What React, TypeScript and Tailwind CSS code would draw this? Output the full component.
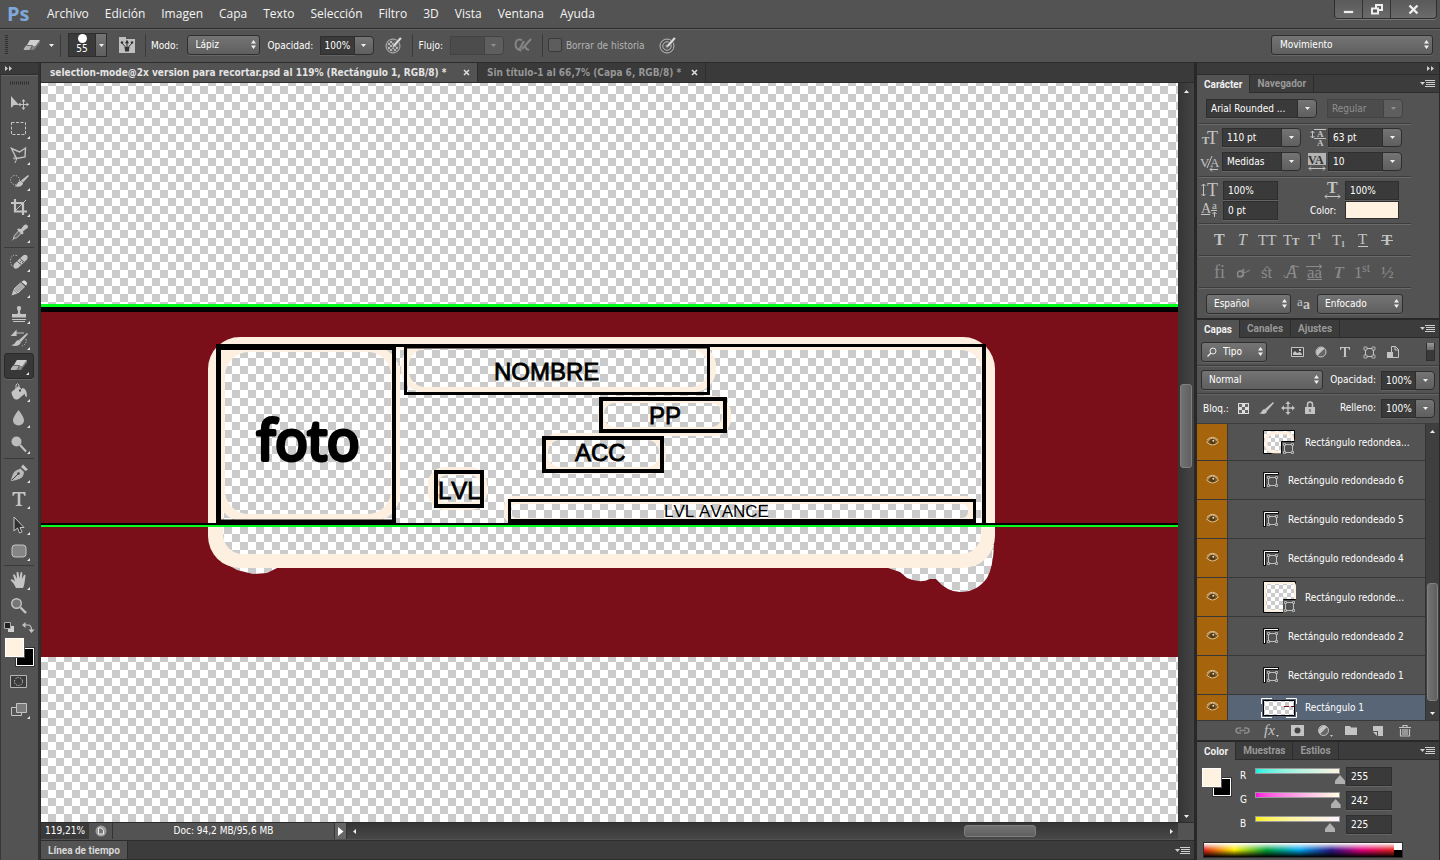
import React, { useState } from "react";

type Kids = { children?: React.ReactNode };

const FIELD =
  "min-w-0 bg-[#3a3a3a] text-[10px] leading-3 text-white outline-none border border-[#2e2e2e] shadow-[0_1px_0_#646464]";
const RAISED = "bg-linear-to-b from-[#747474] to-[#5f5f5f] border border-[#2e2e2e]";

function Svg({ w = 20, h = 20, children, className = "" }: Kids & { w?: number; h?: number; className?: string }) {
  return (
    <svg width={w} height={h} viewBox={`0 0 ${w} ${h}`} className={`shrink-0 overflow-visible ${className}`} fill="none" aria-hidden="true">
      {children}
    </svg>
  );
}

function Down({ dim = false }: { dim?: boolean }) {
  return (
    <Svg w={5} h={3}>
      <path d="M0 0h5L2.500 3z" fill={dim ? "#8f8f8f" : "#f0f0f0"} />
    </Svg>
  );
}

function Choice({ label, options, className = "", pad = "pl-2" }: { label: string; options: string[]; className?: string; pad?: string }) {
  return (
    <div className={`relative h-5 ${className}`}>
      <select
        aria-label={label}
        className={`h-full w-full appearance-none rounded-[3px] pr-4 text-[10px] leading-3 text-white outline-none shadow-[0_1px_0_#666] ${pad} ${RAISED}`}
      >
        {options.map((o) => (
          <option key={o}>{o}</option>
        ))}
      </select>
      <Svg w={5} h={9} className="pointer-events-none absolute top-[5px] right-1">
        <path d="M0 3.500h5L2.500 0zM0 5.500h5L2.500 9z" fill="#f0f0f0" />
      </Svg>
    </div>
  );
}

function Combo({ label, value, className = "", dim = false }: { label: string; value: string; className?: string; dim?: boolean }) {
  return (
    <div className={`flex h-[19px] ${className}`}>
      <input
        aria-label={label}
        defaultValue={value}
        disabled={dim}
        className={
          dim
            ? "h-full w-0 min-w-0 flex-1 border border-[#434343] bg-[#4c4c4c] pl-1 text-[10px] leading-3 text-[#8f8f8f] outline-none"
            : `h-full w-0 flex-1 pl-1 ${FIELD}`
        }
      />
      <button
        type="button"
        aria-label={`${label}: opciones`}
        disabled={dim}
        className={
          dim
            ? "-ml-px flex w-5 items-center justify-center rounded-r-sm border border-[#434343] bg-[#5e5e5e]"
            : `-ml-px flex w-5 items-center justify-center rounded-r-sm ${RAISED}`
        }
      >
        <Down dim={dim} />
      </button>
    </div>
  );
}

function TabBar({ tabs }: { tabs: string[] }) {
  return (
    <div className="flex h-[18px] shrink-0 border-b border-[#2c2c2c] bg-[#3c3c3c] font-['Roboto','Noto_Sans',sans-serif]">
      {tabs.map((t, i) => (
        <button
          type="button"
          key={t}
          className={
            i === 0
              ? "-mb-px border-r border-[#2c2c2c] bg-[#535353] px-[7px] text-[10px] font-bold text-[#f0f0f0]"
              : "border-r border-[#2c2c2c] px-[7px] text-[10px] font-bold text-[#989898]"
          }
        >
          {t}
        </button>
      ))}
      <MenuGlyph />
    </div>
  );
}

function MenuGlyph() {
  return (
    <button type="button" aria-label="Menú del panel" className="ml-auto flex items-center pr-1">
      <Svg w={15} h={9}>
        <path d="M0 3h5L2.500 6z" fill="#cfcfcf" />
        <path d="M5 1.500h10M6 3.500h9M6 5.500h9M5 7.500h10" stroke="#cfcfcf" />
      </Svg>
    </button>
  );
}

/* ---------- Tool icons ---------- */

const G = "#c4c4c4";

const eraser = (
  <>
    <path d="M2 14 8 4h10l-6 10z" fill="#8b8b8b" />
    <path d="M8 4h10l-4 6H4.500z" fill="#d0d0d0" />
    <path d="M7 14H2.500Q1 14 2 12.500L4 9.500h6z" fill="#b5b5b5" />
    <path d="m10.500 14 7.500-10v2.500L12 14z" fill="#777" />
    <path d="m4.500 9.500h6L8.500 14" stroke="#555" strokeWidth=".8" />
  </>
);

const toolGroups: { name: string; icon: React.ReactNode; corner?: boolean }[][] = [
  [
    {
      name: "Mover",
      corner: false,
      icon: (
        <>
          <path d="M2 3v12l3-3h5z" fill={G} />
          <path d="M14.500 7v9M10 11.500h9" stroke={G} />
          <path d="m14.500 6 2 2.500h-4zM14.500 17l2-2.500h-4zM9 11.500 11.500 9.500v4zM20 11.500l-2.500-2v4z" fill={G} />
        </>
      ),
    },
    { name: "Marco", icon: <path d="M2.500 3.500h14v12h-14z" stroke={G} strokeDasharray="3 1.500" /> },
    {
      name: "Lazo",
      icon: (
        <>
          <path d="m2.500 3.500 8 3.500 6-4-.5 9-8.500 1.500z" stroke={G} strokeWidth="1.400" />
          <path d="M8 13q-2-3-3.500 0 0 2 3.500.5-1 2-2 4.500" stroke={G} />
        </>
      ),
    },
    {
      name: "Selección rápida",
      icon: (
        <>
          <circle cx="6" cy="9" r="4.500" stroke={G} strokeDasharray="1.200 1.500" />
          <path d="M19 4 12 9.500l2 2L20 5z" fill={G} />
          <path d="M12 10c-4 0-3 5-7 5 4 2 9 0 9-3z" fill={G} />
        </>
      ),
    },
    {
      name: "Recortar",
      icon: (
        <>
          <path d="M6 2v12.500h12M2 6h12v12" stroke={G} strokeWidth="2.200" />
          <path d="m7 13 10-10" stroke={G} />
        </>
      ),
    },
    {
      name: "Cuentagotas",
      icon: (
        <>
          <path d="m4.500 15.500.8-3L10.500 7l2.500 2.500-5.300 5.300z" stroke={G} fill="#6b6b6b" />
          <path d="m2.500 18 2-3 1 .8z" fill={G} />
          <path d="M9.500 5.500 12 6l2.500-3.200Q17 .5 18.500 2.500T17 6l-3 2.500.5 2-1.500 1-5-5z" fill={G} />
        </>
      ),
    },
  ],
  [
    {
      name: "Pincel corrector",
      icon: (
        <>
          <path d="M8 3.500Q2 2 1.500 8.500 1.500 13 4 15" stroke={G} strokeDasharray="1.200 1.500" />
          <path d="M5 12 14 3.500q2.500-1.500 4 0t0 4L9 16q-2.500 1.500-4 0t0-4z" fill={G} />
          <path d="m8 9 4.500 4M11 6.500l4.500 4" stroke="#666" />
          <path d="M11 9h1v1h-1zM13 10h1v1h-1zM10.500 11h1v1h-1zM12.500 8h1v1h-1z" fill="#555" />
        </>
      ),
    },
    {
      name: "Lápiz",
      icon: (
        <>
          <path d="m2.500 17.500 2-6 4 4z" fill={G} />
          <path d="m5 11 6.500-6 4 3.800L9 15z" fill="#a9a9a9" stroke={G} />
          <path d="M12.500 4Q15 1.500 17 3.500t0 4z" fill="#dcdcdc" />
        </>
      ),
    },
    {
      name: "Tampón",
      icon: (
        <>
          <path d="M9 9q.5-2-1-4-.5-3 2-3t2 3q-1.500 2-1 4l1 1h5v3.500H3V10h5z" fill={G} />
          <path d="M3 15.500h14M4 17.500h12" stroke={G} />
        </>
      ),
    },
    {
      name: "Pincel de historia",
      icon: (
        <>
          <path d="M7 3h8M7 1v4.500L3 5.500 7 1z" stroke={G} strokeWidth="1.200" fill={G} />
          <path d="m18 3-8 7 2 2 7-8z" fill={G} />
          <path d="M10 10c-4 0-3 5-8 5 4 2 9 1 10-3z" fill={G} />
          <path d="M17 9q1 5-4 7" stroke={G} strokeDasharray="1.300 1.300" />
        </>
      ),
    },
    { name: "Borrador", icon: eraser },
    {
      name: "Bote de pintura",
      icon: (
        <>
          <path d="m2.500 10 7-6 7 7-7 6q-3 1.500-5-1T2.500 10z" fill={G} />
          <path d="M7 8V3q1.500-3 3 0v6" stroke={G} />
          <path d="M10 8.500h2" stroke="#444" strokeWidth="2" />
          <path d="M13 6q5 0 5 9l-2-1q0-4-3-5z" fill={G} />
        </>
      ),
    },
    { name: "Desenfocar", icon: <path d="M9.500 2q-5.500 7-5.500 10.500a5.500 5 0 0 0 11 0Q15 9 9.500 2z" fill="#bcbcbc" /> },
    {
      name: "Sobreexponer",
      icon: (
        <>
          <circle cx="7.500" cy="7.500" r="5" fill="#bcbcbc" />
          <path d="m11 11 6 6.500" stroke={G} strokeWidth="2" />
        </>
      ),
    },
  ],
  [
    {
      name: "Pluma",
      icon: (
        <>
          <path d="M2 18q1-8 5-10.500l4.500-2L15 9q-.5 5-3 6-3 2-10 3z" fill="#b8b8b8" />
          <path d="m3 17 6-6" stroke="#444" />
          <circle cx="9.500" cy="10.500" r="1.300" fill="#444" />
          <path d="m12 4 2-2.500 5 5L16.500 8z" fill={G} />
        </>
      ),
    },
    { name: "Texto", icon: <path d="M3.500 3h13v4h-1q-.5-2.500-2-2.500h-2.200V15q0 1.200 2 1.200V17H6.700v-.8q2 0 2-1.200V4.500H6.500Q5 4.500 4.500 7h-1z" fill={G} /> },
    { name: "Selección de trazado", icon: <path d="M5 2v14l3.500-3 2 5 2.500-1-2-4.500H15z" fill="#303030" stroke={G} /> },
    { name: "Rectángulo redondeado", icon: <rect x="3" y="4" width="14" height="12" rx="3" fill="#858585" stroke={G} /> },
  ],
  [
    {
      name: "Mano",
      icon: (
        <path
          d="M7 18Q5.500 14 1.500 10q1.500-2 4.500 1.500L4 5q1-1.500 2 0l2 4L7.500 2.500q1-1.500 2 0l1 6L11.500 2.500q1.200-1 1.800.5L13 9l2-4q1.300-.7 1.500.7L15.500 13Q15 16 14 18z"
          fill={G}
        />
      ),
    },
    {
      name: "Zoom",
      corner: false,
      icon: (
        <>
          <circle cx="7.500" cy="7.500" r="4.800" fill="#777" stroke={G} strokeWidth="1.400" />
          <path d="m11.500 11.500 5.500 5.500" stroke={G} strokeWidth="2.400" />
        </>
      ),
    },
  ],
];

function Corner() {
  return (
    <Svg w={3} h={3} className="absolute right-1 bottom-[3px]">
      <path d="M3 0v3H0z" fill="#e6e6e6" />
    </Svg>
  );
}

function Chevrons() {
  return (
    <Svg w={8} h={5}>
      <path d="m0 0 3 2.500L0 5zM4 0l3 2.500L4 5z" fill="#d0d0d0" />
    </Svg>
  );
}

function Toolbar() {
  const [active, setActive] = useState("Borrador");
  return (
    <aside className="flex w-10 shrink-0 flex-col border-r-2 border-l border-r-[#323232] border-l-[#383838]">
      <div className="flex h-3 shrink-0 items-center border-b border-[#2c2c2c] bg-[#3a3a3a] pl-1">
        <Chevrons />
      </div>
      <div className="flex h-[15px] shrink-0 items-center justify-center border-t border-[#646464]">
        <Svg w={20} h={4}>
          <path d="M0 2h20" stroke="#2f2f2f" strokeWidth="3" strokeDasharray="1 1" />
        </Svg>
      </div>
      <div className="flex flex-col items-center pr-px">
        {toolGroups.map((group, gi) => (
          <div key={gi} className="flex flex-col">
            {gi > 0 && <hr className="my-px h-px border-0 bg-[#3a3a3a]" />}
            {group.map((t) => (
              <button
                type="button"
                key={t.name}
                aria-label={t.name}
                onClick={() => setActive(t.name)}
                className={
                  t.name === active
                    ? "relative flex h-[26px] w-[30px] items-center justify-center rounded-[3px] border border-[#2a2a2a] bg-[#383838] shadow-[0_1px_0_#666]"
                    : "relative flex h-[26px] w-[30px] items-center justify-center"
                }
              >
                <Svg>{t.icon}</Svg>
                {t.corner !== false && <Corner />}
              </button>
            ))}
          </div>
        ))}
        <div className="flex h-4 w-[30px] items-center justify-between">
          <Svg w={10} h={10}>
            <path d="M4 4h6v6H4z" fill="#d0d0d0" />
            <path d="M.5.5h6v6h-6z" fill="#222" stroke="#aaa" />
          </Svg>
          <Svg w={12} h={11}>
            <path d="M3 3h3q3.500 0 3.500 5" stroke={G} strokeWidth="1.200" />
            <path d="M3.500 0v6L0 3zM6.500 7.500h6l-3 3.500z" fill={G} />
          </Svg>
        </div>
        <Swatches size="tools" />
        <button type="button" aria-label="Máscara rápida" className="flex h-8 w-[30px] items-center justify-center">
          <Svg w={18} h={14}>
            <path d="M.5.5h16v12H.5z" fill="#3c3c3c" stroke="#b5b5b5" />
            <circle cx="8.500" cy="6.500" r="4" stroke="#ddd" strokeDasharray="1.200 1.300" />
          </Svg>
        </button>
        <button type="button" aria-label="Modo de pantalla" className="relative flex h-6 w-[30px] items-center justify-center">
          <Svg w={18} h={16}>
            <path d="M1.500 5.500h10v8h-10z" fill="#555" stroke={G} />
            <path d="M6.500 1.500h10v9h-10z" fill="#7b7b7b" stroke={G} />
          </Svg>
          <Corner />
        </button>
      </div>
    </aside>
  );
}

function Swatches({ size }: { size: "tools" | "panel" }) {
  return (
    <div className={size === "tools" ? "relative mt-[3px] h-7 w-[29px]" : "relative h-7 w-[29px]"}>
      <button type="button" aria-label="Color de fondo" className="absolute right-0 bottom-0 size-[18px] border border-white bg-black outline-1 outline-[#333]" />
      <button type="button" aria-label="Color frontal" className="absolute top-0 left-0 size-[19px] border border-white bg-[#fff2e1] outline-1 outline-[#555]" />
    </div>
  );
}

/* ---------- Document canvas ---------- */

const CREAM = "#fef0e1";

function Ring({ x, y, w, h, r, ix, iy, iw, ih, ir }: Record<"x" | "y" | "w" | "h" | "r" | "ix" | "iy" | "iw" | "ih" | "ir", number>) {
  return (
    <>
      <rect x={x} y={y} width={w} height={h} rx={r} fill={CREAM} />
      <rect x={ix} y={iy} width={iw} height={ih} rx={ir} fill="url(#checker)" />
    </>
  );
}

function Canvas() {
  return (
    <svg className="block h-full w-full" aria-label="Documento">
      <g transform="translate(-41 -83)">
        <defs>
          <pattern id="checker" width="16" height="16" patternUnits="userSpaceOnUse" y="6">
            <path d="M0 0h16v16H0z" fill="#fff" />
            <path d="M8 0h8v8H8zM0 8h8v8H0z" fill="#cbcbcb" />
          </pattern>
        </defs>
        <rect x="41" y="83" width="100%" height="100%" fill="url(#checker)" />
        <rect x="41" y="312" width="100%" height="345" fill="#7a0f1a" />
        <path d="M213 545 223 562 237 570 253 574 267 573 277 568V545zM888 568 900 572 907 578Q920 584 930 579H936Q947 592 960 592 977 592 987 578 993 568 994 545L960 540z" fill="url(#checker)" />
        <Ring x={208} y={337} w={787} h={231} r={32} ix={223} iy={350} iw={758} ih={204} ir={20} />
        <Ring x={217} y={346} w={183} h={176} r={28} ix={225} iy={352} iw={166} ih={162} ir={24} />
        <path d="M221 346h60l-60 60z" fill={CREAM} />
        <rect x="225" y="352" width="166" height="162" rx="24" fill="url(#checker)" />
        <Ring x={401} y={344} w={315} h={48} r={22} ix={409} iy={349} iw={298} ih={38} ir={16} />
        <Ring x={598} y={396} w={133} h={40} r={17} ix={604} iy={403} iw={118} ih={24} ir={11} />
        <Ring x={542} y={433} w={124} h={41} r={17} ix={548} iy={440} iw={111} ih={27} ir={12} />
        <Ring x={428} y={467} w={59} h={43} r={17} ix={437} iy={475} iw={43} ih={27} ir={10} />
        <Ring x={504} y={496} w={472} h={28} r={10} ix={511} iy={504} iw={457} ih={14} ir={6} />
        <g fill="none" stroke="#000" strokeWidth="4">
          <path d="M216 345.500h768.500" strokeWidth="3" />
          <path d="M984 344v180" />
          <path d="M218.500 344v179" strokeWidth="5" />
          <path d="M216 347h180" strokeWidth="6" />
          <path d="M394 344v179M216 521.500h180" />
          <path d="M404 347h306" strokeWidth="3" />
          <rect x="405.500" y="346.500" width="303" height="47" strokeWidth="3" />
          <rect x="601" y="399" width="124" height="32" />
          <rect x="544" y="438" width="118" height="33" />
          <rect x="436" y="472" width="46" height="34" strokeWidth="4" />
          <path d="M509.500 523v-22.500h465V523" strokeWidth="3" />
          <path d="M508 521h468" />
        </g>
        <g fontFamily="'Liberation Sans', Arial, sans-serif" fontSize="24" stroke="#000" strokeWidth=".8" className="[font-kerning:none]">
          <text x="257" y="460" fontSize="54" fontFamily="'Open Sans', 'Noto Sans', sans-serif" strokeWidth="4" strokeLinejoin="round">foto</text>
          <text x="494" y="380">NOMBRE</text>
          <text x="649" y="424">PP</text>
          <text x="575" y="461">ACC</text>
          <text x="438" y="499">LVL</text>
          <text x="664" y="517" fontSize="17" strokeWidth="0">LVL AVANCE</text>
        </g>
        <rect x="41" y="304" width="100%" height="3" fill="#00ff1e" />
        <rect x="41" y="307" width="100%" height="5" />
        <rect x="41" y="523" width="100%" height="2" />
        <rect x="41" y="525" width="100%" height="2" fill="#00ff1e" />
      </g>
    </svg>
  );
}

function Document() {
  return (
    <main className="flex min-w-0 flex-1 flex-col">
      <div className="flex h-5 shrink-0 border-b border-[#2c2c2c] bg-[#3a3a3a] text-[10px] font-bold">
        <div className="flex w-[437px] items-center justify-between border-r border-[#2c2c2c] bg-[#535353] pr-[7px] pl-[9px] text-[#e4e4e4]">
          <button type="button" className="whitespace-nowrap">selection-mode@2x version para recortar.psd al 119% (Rectángulo 1, RGB/8) *</button>
          <Close />
        </div>
        <div className="flex w-[228px] items-center justify-between border-r border-[#2c2c2c] pr-[7px] pl-[9px] text-[#969696]">
          <button type="button" className="whitespace-nowrap">Sin título-1 al 66,7% (Capa 6, RGB/8) *</button>
          <Close />
        </div>
      </div>
      <div className="flex min-h-0 flex-1">
        <div className="min-w-0 flex-1 overflow-hidden">
          <Canvas />
        </div>
        <div className="flex w-4 shrink-0 flex-col items-center bg-linear-to-r from-[#353535] to-[#444] pt-[7px] pb-1">
          <Svg w={5} h={3}><path d="M0 3h5L2.500 0z" fill="#eee" /></Svg>
          <div className="flex-[292]" />
          <div className="w-3 flex-[82] rounded-[3px] border border-[#808080] bg-linear-to-r from-[#727272] to-[#606060]" />
          <div className="flex-[348]" />
          <Down />
        </div>
      </div>
      <div className="flex h-[17px] shrink-0 border-t border-[#2c2c2c] text-[10px] text-white">
        <input aria-label="Nivel de zoom" defaultValue="119,21%" className="w-12 bg-[#3a3a3a] pb-0.5 pl-1 outline-none" />
        <button type="button" aria-label="Vista previa" className="flex w-6 items-center justify-center border-r border-[#333]">
          <Svg w={12} h={12}>
            <circle cx="6" cy="6" r="5.500" fill="#9c9c9c" />
            <path d="M3.500 3h3l2 2.500V9h-5z" fill="#777" stroke="#eee" />
          </Svg>
        </button>
        <span className="flex w-[221px] items-center justify-center pb-px">Doc: 94,2 MB/95,6 MB</span>
        <button type="button" aria-label="Opciones de estado" className="flex w-[13px] items-center justify-center border-x border-[#333] bg-[#666]">
          <Svg w={7} h={9}><path d="m1 0 5.500 4.500L1 9z" fill="#fff" /></Svg>
        </button>
        <div className="flex flex-1 items-center bg-linear-to-b from-[#353535] to-[#484848] px-1">
          <Svg w={7} h={5}><path d="M5 0v5L2 2.500z" fill="#eee" /></Svg>
          <div className="flex-[608]" />
          <div className="h-3 flex-[71] rounded-[3px] border border-[#808080] bg-linear-to-b from-[#727272] to-[#606060]" />
          <div className="flex-[133]" />
          <Svg w={5} h={5}><path d="M1 0v5L4 2.500z" fill="#eee" /></Svg>
        </div>
        <div className="w-4 shrink-0 bg-[#535353]" />
      </div>
      <div className="mt-px flex h-5 shrink-0 border-y border-[#2c2c2c] bg-[#3c3c3c]">
        <button type="button" className="border-r border-[#2c2c2c] bg-[#535353] px-[7px] font-['Roboto','Noto_Sans',sans-serif] text-[10px] font-bold text-[#d8d8d8]">Línea de tiempo</button>
        <MenuGlyph />
      </div>
    </main>
  );
}

function Close() {
  return (
    <button type="button" aria-label="Cerrar" className="pl-px">
      <Svg w={7} h={7}><path d="m1 1 5 5M6 1 1 6" stroke="#e0e0e0" strokeWidth="1.500" /></Svg>
    </button>
  );
}

/* ---------- Top bars ---------- */

const menus = ["Archivo", "Edición", "Imagen", "Capa", "Texto", "Selección", "Filtro", "3D", "Vista", "Ventana", "Ayuda"];

function MenuBar() {
  return (
    <header className="flex h-[29px] shrink-0 items-center border-b border-[#2c2c2c] pr-[3px] pl-[7px]">
      <span className="w-8 font-['Open_Sans',sans-serif] text-[20px] leading-6 font-bold text-[#7fa8d8]">Ps</span>
      <nav className="flex font-['Open_Sans','Noto_Sans',sans-serif] text-[12px] text-[#f4f4f4]">
        {menus.map((m) => (
          <button type="button" key={m} className="px-2">{m}</button>
        ))}
      </nav>
      <div className="ml-auto flex h-[19px] self-start rounded-b-[4px] border border-t-0 border-[#2e2e2e] bg-linear-to-b from-[#5a5a5a] to-[#6b6b6b] shadow-[0_1px_0_#777]">
        <button type="button" aria-label="Minimizar" className="flex w-7 items-center justify-center border-r border-[#333]">
          <Svg w={11} h={10}><path d="M.5 6.500h10v3H.5z" fill="#eee" stroke="#444" strokeWidth=".5" /></Svg>
        </button>
        <button type="button" aria-label="Restaurar" className="flex w-7 items-center justify-center border-r border-[#333]">
          <Svg w={12} h={11}>
            <path d="M5 1h6v5H5z" stroke="#eee" strokeWidth="2" />
            <path d="M1 4.500h6v5H1z" fill="#555" stroke="#eee" strokeWidth="2" />
          </Svg>
        </button>
        <button type="button" aria-label="Cerrar ventana" className="flex w-[45px] items-center justify-center">
          <Svg w={11} h={9}><path d="m1.500.5 8 8M9.500.5l-8 8" stroke="#eee" strokeWidth="2.400" /></Svg>
        </button>
      </div>
    </header>
  );
}

function Divider() {
  return <div className="h-[23px] w-px bg-[#3a3a3a]" />;
}

function OptionsBar() {
  return (
    <div className="flex h-[34px] shrink-0 items-center border-t border-b border-t-[#646464] border-b-[#2c2c2c] pb-0.5 pl-[5px] text-[10px] text-white">
      <Svg w={4} h={20}><path d="M1.500 0v20" stroke="#2f2f2f" strokeWidth="3" strokeDasharray="1 1" /></Svg>
      <button type="button" aria-label="Borrador" className="ml-[13px] flex items-center gap-[7px]">
        <Svg h={18}>{eraser}</Svg>
        <Down />
      </button>
      <div className="mr-[7px] ml-1.5"><Divider /></div>
      <button type="button" aria-label="Pincel" className="flex h-6">
        <span className="flex w-7 flex-col items-center border border-[#2e2e2e] bg-[#3a3a3a]">
          <span className="size-[9px] shrink-0 rounded-full bg-white" />
          <span className="text-[10px] leading-3">55</span>
        </span>
        <span className={`-ml-px flex w-3 items-center justify-center ${RAISED}`}><Down /></span>
      </button>
      <button type="button" aria-label="Panel de pincel" className="ml-3">
        <Svg w={16} h={16}>
          <path d="M0 2V0h7v2h9v14H0z" fill="#c0c0c0" />
          <circle cx="3" cy="5.500" r="1.300" fill="#333" />
          <circle cx="13" cy="5.500" r="1.300" fill="#333" />
          <path d="M8 3.500 6.700 6h2.600zM3 6l3.500 4M13 6l-3.500 4M8 6v4" fill="#333" stroke="#333" />
          <path d="M5.500 10h5l-.7 4.500H6.200z" fill="#333" />
        </Svg>
      </button>
      <div className="ml-[10px]"><Divider /></div>
      <span className="ml-[5px]">Modo:</span>
      <Choice label="Modo" options={["Lápiz", "Pincel", "Bloque"]} className="ml-2 w-[73px]" />
      <span className="ml-2 w-[46px]">Opacidad:</span>
      <Combo label="Opacidad" value="100%" className="ml-[6px] w-[54px]" />
      <button type="button" aria-label="Presión para opacidad" className="ml-[11px]">
        <Svg w={18} h={18}>
          <circle cx="8" cy="10" r="7" fill="#666" stroke="#b5b5b5" />
          <path d="M3 7h2v2H3zM7 7h2v2H7zM5 9h2v2H5zM9 9h2v2H9zM3 11h2v2H3zM7 11h2v2H7zM11 11h2v2h-2zM5 13h2v2H5zM9 13h2v2H9zM5 5h2v2H5z" fill="#b5b5b5" />
          <path d="m7 12 1-3 7-8 2 1.500-7 8z" fill="#e0e0e0" stroke="#555" strokeWidth=".5" />
        </Svg>
      </button>
      <div className="ml-[9px]"><Divider /></div>
      <span className="ml-[6px]">Flujo:</span>
      <Combo label="Flujo" value="" dim className="ml-[7px] w-[54px]" />
      <Svg w={19} h={16} className="ml-[10px]">
        <path d="M8 3Q2 1 1.500 7q0 6 6 6.500" stroke="#858585" strokeWidth="2" />
        <path d="m5 13 5-9M8 12l9-10M11 8q0 4 4 5" stroke="#858585" strokeWidth="2" />
      </Svg>
      <div className="ml-[9px]"><Divider /></div>
      <label className="ml-[5px] flex items-center gap-1 text-[#b4b4b4]">
        <input type="checkbox" className="size-[14px] appearance-none rounded-[2px] border border-[#3a3a3a] bg-[#5d5d5d]" />
        Borrar de historia
      </label>
      <button type="button" aria-label="Presión para tamaño" className="ml-[14px]">
        <Svg w={18} h={18}>
          <circle cx="8" cy="10" r="7" stroke="#bdbdbd" />
          <circle cx="8" cy="10" r="4.200" stroke="#bdbdbd" />
          <circle cx="8" cy="10" r="1.500" fill="#bdbdbd" />
          <path d="m7 12 1-3 7-8 2 1.500-7 8z" fill="#e0e0e0" stroke="#555" strokeWidth=".5" />
        </Svg>
      </button>
      <Choice label="Espacio de trabajo" options={["Movimiento", "Aspectos esenciales", "Pintura"]} className="mr-[7px] ml-auto w-[162px]" />
    </div>
  );
}

/* ---------- Character panel ---------- */

function Rule() {
  return <hr className="mr-7 ml-0.5 h-0.5 border-0 border-b border-[#6a6a6a] bg-[#3d3d3d]" />;
}

function Serif({ x, y, s, children, c = G, italic = false, w = "normal" }: Kids & { x: number; y: number; s: number; c?: string; italic?: boolean; w?: string }) {
  return (
    <text x={x} y={y} fontSize={s} fill={c} fontWeight={w} fontStyle={italic ? "italic" : "normal"} fontFamily="'Liberation Serif', 'Times New Roman', serif">
      {children}
    </text>
  );
}

const styleIcons: [string, React.ReactNode][] = [
  ["Negrita", <Serif x={4} y={14} s={16} w="bold">T</Serif>],
  ["Cursiva", <Serif x={4} y={14} s={16} italic>T</Serif>],
  ["Mayúsculas", <Serif x={0} y={14} s={15}>TT</Serif>],
  ["Versalitas", <><Serif x={1} y={14} s={15}>T</Serif><Serif x={10} y={14} s={11} w="bold">T</Serif></>],
  ["Superíndice", <><Serif x={2} y={14} s={15}>T</Serif><Serif x={11} y={8} s={8} w="bold">1</Serif></>],
  ["Subíndice", <><Serif x={2} y={14} s={15}>T</Serif><Serif x={11} y={16} s={8} w="bold">1</Serif></>],
  ["Subrayado", <><Serif x={4} y={13} s={15}>T</Serif><path d="M4 15.500h10" stroke={G} /></>],
  ["Tachado", <><Serif x={4} y={14} s={15} w="bold">T</Serif><path d="M3 9.500h12" stroke={G} /></>],
];

const DIM = "#8b8b8b";
const otIcons: [string, React.ReactNode][] = [
  ["Ligaduras", <Serif x={4} y={15} s={18} c={DIM}>fi</Serif>],
  ["Alternativas contextuales", <><circle cx="6.500" cy="11" r="3" stroke={DIM} strokeWidth="1.400" /><path d="M3 14Q10 14 10 6q-3 1-3 3 4 2 9-2" stroke={DIM} /></>],
  ["Ligaduras opcionales", <><Serif x={3} y={15} s={17} c={DIM}>st</Serif><path d="M6.500 7q2-6 5-1" stroke={DIM} /></>],
  ["Florituras", <><Serif x={4} y={15} s={18} c={DIM} italic>A</Serif><path d="M2 12q0 4 4 2M8 4q4-2 9 0" stroke={DIM} /></>],
  ["Alternativas estilísticas", <><Serif x={1} y={15} s={17} c={DIM}>aa</Serif><path d="M0 3.500h15M13 1.500l3 2-3 2M1 16.500h15" stroke={DIM} /></>],
  ["Titulación", <><Serif x={4} y={15} s={17} c={DIM} italic>T</Serif><path d="m7 14 2.500-9" stroke={DIM} /></>],
  ["Ordinales", <><Serif x={0} y={15} s={17} c={DIM}>1</Serif><Serif x={8} y={9} s={12} c={DIM}>st</Serif></>],
  ["Fracciones", <Serif x={3} y={15} s={17} c={DIM}>½</Serif>],
];

function IconRow({ items }: { items: [string, React.ReactNode][] }) {
  return (
    <div className="flex h-[30px] items-center gap-[6px] pl-[13px]">
      {items.map(([name, icon]) => (
        <button type="button" key={name} aria-label={name} className="w-[18px]">
          <Svg w={18} h={18}>{icon}</Svg>
        </button>
      ))}
    </div>
  );
}

function CharacterPanel() {
  return (
    <section className="shrink-0 text-[10px] text-white">
      <TabBar tabs={["Carácter", "Navegador"]} />
      <div className="flex h-[30px] items-center gap-[10px] pl-[9px]">
        <Combo label="Fuente" value="Arial Rounded ..." className="w-[111px]" />
        <Combo label="Estilo de fuente" value="Regular" dim className="w-[76px]" />
      </div>
      <Rule />
      <div className="flex h-[25px] items-center pl-1">
        <Svg w={18} h={18}><Serif x={1} y={15} s={11} w="bold">T</Serif><Serif x={6} y={15} s={18}>T</Serif></Svg>
        <Combo label="Tamaño" value="110 pt" className="ml-[3px] w-[79px]" />
        <Svg w={18} h={18} className="ml-2">
          <path d="M3.500 2v7M1.500 4l2-2 2 2M1.500 7l2 2 2-2M5 .5h12M5 9.500h12" stroke={G} />
          <Serif x={8} y={8} s={9} w="bold">A</Serif><Serif x={8} y={17} s={9} w="bold">A</Serif>
        </Svg>
        <Combo label="Interlineado" value="63 pt" className="ml-px w-[74px]" />
      </div>
      <div className="flex h-[26px] items-center pl-1 pb-[3px]">
        <Svg w={18} h={18}><Serif x={-1} y={14} s={13}>V</Serif><Serif x={9} y={14} s={13}>A</Serif><path d="m6 15 5-12M9 16.500h8M11 14.500l-2 2 2 2" stroke={G} /></Svg>
        <Combo label="Kerning" value="Medidas" className="ml-[3px] w-[79px]" />
        <Svg w={18} h={18} className="ml-[7px]">
          <path d="M0 0h18v12H0z" fill="#b4b4b4" />
          <Serif x={0} y={11} s={12} c="#333" w="bold">VA</Serif>
          <path d="M1 15.500h16M3 13.500l-2 2 2 2M15 13.500l2 2-2 2" stroke={G} />
        </Svg>
        <Combo label="Tracking" value="10" className="ml-0.5 w-[74px]" />
      </div>
      <Rule />
      <div className="grid grid-cols-[26px_55px_46px_21px_54px] gap-y-px pt-[3px] pb-[3px]">
        <Svg w={18} h={18} className="ml-1">
          <path d="M2.500 3v12M.5 5l2-2 2 2M.5 13l2 2 2-2" stroke={G} /><Serif x={6} y={15} s={18}>T</Serif>
        </Svg>
        <input aria-label="Escala vertical" defaultValue="100%" className={`h-[19px] pl-1 ${FIELD}`} />
        <span />
        <Svg w={18} h={18}>
          <Serif x={3} y={12} s={16} w="bold">T</Serif><path d="M1 15.500h15M3 13.500l-2 2 2 2M14 13.500l2 2-2 2" stroke={G} />
        </Svg>
        <input aria-label="Escala horizontal" defaultValue="100%" className={`h-[19px] pl-1 ${FIELD}`} />
        <Svg w={18} h={18} className="ml-1">
          <Serif x={0} y={12} s={14}>A</Serif><Serif x={11} y={8} s={11}>a</Serif><path d="M0 13.500h9M10 9.500h6M13.500 16v-5M11.500 13l2-2 2 2" stroke={G} />
        </Svg>
        <input aria-label="Desplazamiento vertical" defaultValue="0 pt" className={`h-[19px] pl-1 ${FIELD}`} />
        <span className="col-span-2 pt-0.5 pl-8">Color:</span>
        <button type="button" aria-label="Color del texto" className="h-[18px] border border-[#2e2e2e] bg-[#fff2e1]" />
      </div>
      <Rule />
      <IconRow items={styleIcons} />
      <Rule />
      <IconRow items={otIcons} />
      <Rule />
      <div className="flex h-[29px] items-center pl-[9px]">
        <Choice label="Idioma" options={["Español", "Inglés"]} className="w-[85px]" pad="pl-[7px]" />
        <Svg w={16} h={14} className="mx-[5px]"><Serif x={1} y={9} s={13}>a</Serif><Serif x={7} y={12} s={14} w="bold">a</Serif></Svg>
        <Choice label="Suavizado" options={["Enfocado", "Nítido", "Fuerte"]} className="w-[86px]" pad="pl-[7px]" />
      </div>
    </section>
  );
}

/* ---------- Layers panel ---------- */

type Layer = { name: string; thumb: "oval" | "corner" | "square" | "selected" };
const layers: Layer[] = [
  { name: "Rectángulo redondea...", thumb: "oval" },
  { name: "Rectángulo redondeado 6", thumb: "corner" },
  { name: "Rectángulo redondeado 5", thumb: "corner" },
  { name: "Rectángulo redondeado 4", thumb: "corner" },
  { name: "Rectángulo redonde...", thumb: "square" },
  { name: "Rectángulo redondeado 2", thumb: "corner" },
  { name: "Rectángulo redondeado 1", thumb: "corner" },
  { name: "Rectángulo 1", thumb: "selected" },
];

function ShapeMark({ x, y }: { x: number; y: number }) {
  return (
    <g transform={`translate(${x} ${y})`}>
      <path d="M-1-1h13v13H-1z" fill="#535353" />
      <path d="M1.500 1.500h8v8h-8z" stroke="#bdbdbd" />
      <path d="M.5.5h2v2h-2zM8.500.5h2v2h-2zM.5 8.500h2v2h-2zM8.500 8.500h2v2h-2z" fill="#535353" stroke="#c8c8c8" strokeWidth=".8" />
    </g>
  );
}

function Thumb({ kind }: { kind: Layer["thumb"] }) {
  if (kind === "corner")
    return (
      <Svg w={17} h={17}>
        <path d="M0 16V0h16v3H3v13z" fill="#111" />
        <path d="M1.500 15V1.500H15" stroke="#fff" />
        <ShapeMark x={4} y={4} />
      </Svg>
    );
  if (kind === "selected")
    return (
      <Svg w={36} h={20}>
        <path d="M.5 6V.5H11M25 .5h10.500V6M.5 14v5.500H11M25 19.500h10.500V14" stroke="#fff" />
        <path d="M2.500 2.500h31v15h-31z" fill="url(#thumbChecker)" stroke="#000" />
        <path d="M23 8.500h10" stroke="#7a0f1a" strokeDasharray="5 2" />
      </Svg>
    );
  return (
    <Svg w={33} h={32}>
      {kind === "square" ? (
        <>
          <path d="M.5.5h32v18h-12v13H.5z" fill="url(#thumbChecker)" stroke="#000" />
          <path d="M20 30H4q-2 0-2-2V4q0-2 2-2h25q3 0 3 3v13" stroke={CREAM} strokeWidth="2" />
          <ShapeMark x={21} y={20} />
        </>
      ) : (
        <>
          <path d="M.5 4.500h31v11h-13v12H.5z" fill="url(#thumbChecker)" stroke="#000" />
          <path d="M18 26h-7a8 9 0 0 1-8-10q0-9 9-9h12q5 1 6 8" stroke={CREAM} strokeWidth="3" />
          <ShapeMark x={20} y={17} />
        </>
      )}
    </Svg>
  );
}

function Eye() {
  return (
    <Svg w={13} h={11}>
      <path d="M.5 6Q6.500-1.500 12.500 6 6.500 12 .5 6z" fill="#8a5a14" stroke="#d9bd92" />
      <circle cx="6.500" cy="5.500" r="2.700" fill="#4d3a1d" />
      <circle cx="7.300" cy="4.700" r="1" fill="#e9d9bd" />
      <path d="M1 4Q6.500-1.500 12 4" stroke="#d9bd92" />
    </Svg>
  );
}

function LayersPanel() {
  return (
    <section className="flex min-h-0 flex-1 flex-col text-[10px] text-white">
      <svg className="absolute size-0" aria-hidden="true">
        <defs>
          <pattern id="thumbChecker" width="8" height="8" patternUnits="userSpaceOnUse">
            <path d="M0 0h8v8H0z" fill="#fff" />
            <path d="M4 0h4v4H4zM0 4h4v4H0z" fill="#cbcbcb" />
          </pattern>
        </defs>
      </svg>
      <TabBar tabs={["Capas", "Canales", "Ajustes"]} />
      <div className="flex h-7 shrink-0 items-center border-b border-[#3d3d3d] pr-1 pl-1">
        <div className="relative">
          <Choice label="Tipo de filtro" options={["Tipo", "Nombre"]} className="w-[66px]" pad="pl-[21px]" />
          <Svg w={10} h={10} className="pointer-events-none absolute top-[5px] left-1.5">
            <circle cx="6" cy="4" r="3" stroke="#e6e6e6" /><path d="M4 6 .5 9.500" stroke="#e6e6e6" strokeWidth="1.400" />
          </Svg>
        </div>
        <div className="ml-[22px] flex gap-2">
          <Svg w={16} h={16}><path d="M2.500 3.500h12v9h-12z" fill="#444" stroke={G} /><path d="M4 11V9l2-2 2 2 3-1 2 2v1z" fill={G} /><path d="M10 5h2v2h-2z" fill={G} /></Svg>
          <Svg w={16} h={16}><circle cx="8" cy="8" r="5" fill="#666" stroke={G} /><path d="M4.500 11.500a5 5 0 0 1 7-7z" fill={G} /></Svg>
          <Svg w={16} h={16}><path d="M3 3h10v3h-.7q-.3-2-1.500-2H9v8q0 1 1.500 1H5.500Q7 13 7 12V4H5.200Q4 4 3.700 6H3z" fill={G} /></Svg>
          <Svg w={16} h={16}><path d="M4.500 4.500h8v8h-8z" stroke={G} /><path d="M3 3h3v3H3zM11 3h3v3h-3zM3 11h3v3H3zM11 11h3v3h-3z" fill="#535353" stroke={G} strokeWidth=".8" /></Svg>
          <Svg w={16} h={16}><path d="M6.500 2.500h4l3 3v8h-7z" stroke={G} /><path d="M10 2v4h4" stroke={G} /><path d="M2 8h6v6H2z" fill={G} /></Svg>
        </div>
        <button type="button" aria-label="Filtrado de capas" className="ml-auto h-[18px] w-[9px] border border-[#2e2e2e] bg-[#3a3a3a]">
          <span className="-mt-[9px] block h-[7px] bg-linear-to-b from-[#999] to-[#6a6a6a]" />
        </button>
      </div>
      <div className="flex h-7 shrink-0 items-center border-t border-b border-t-[#646464] border-b-[#3d3d3d] pr-1 pl-1">
        <Choice label="Modo de fusión" options={["Normal", "Disolver", "Multiplicar"]} className="w-[122px]" pad="pl-[7px]" />
        <span className="ml-auto pr-[5px] pb-0.5">Opacidad:</span>
        <Combo label="Opacidad de capa" value="100%" className="w-[54px]" />
      </div>
      <div className="flex h-[30px] shrink-0 items-center border-t border-b border-t-[#646464] border-b-[#3d3d3d] pr-1 pb-0.5 pl-[6px]">
        <span className="w-[33px]">Bloq.:</span>
        <div className="flex gap-[6px]">
          <Svg w={16} h={16}><path d="M2 3h11v11H2z" fill="#ddd" /><path d="M3 4h3v3H3zM9 4h3v3H9zM6 7h3v3H6zM3 10h3v3H3zM9 10h3v3H9z" fill="#666" /></Svg>
          <Svg w={16} h={16}><path d="m15 2-8 7 2 2 7-8z" fill={G} /><path d="M7 9c-4 0-2 4-6 4 4 2 8 1 8-2z" fill={G} /></Svg>
          <Svg w={16} h={16}><path d="M8 3v10M3 8h10" stroke={G} strokeWidth="1.400" /><path d="m8 1 2.500 3h-5zM8 15l2.500-3h-5zM1 8l3-2.500v5zM15 8l-3-2.500v5z" fill={G} /></Svg>
          <Svg w={16} h={16}><path d="M5.500 7V4.500q0-2.500 2.500-2.500t2.500 2.500V7" stroke={G} strokeWidth="1.500" /><path d="M3 7h10v7H3z" fill={G} /><path d="M7.500 9h1v3h-1z" fill="#444" /></Svg>
        </div>
        <span className="ml-auto pr-[5px] pb-0.5">Relleno:</span>
        <Combo label="Relleno" value="100%" className="w-[54px]" />
      </div>
      <div className="flex min-h-0 flex-1">
        <ul className="flex min-w-0 flex-1 flex-col overflow-hidden">
          {layers.map((l, i) => (
            <li
              key={l.name}
              className={
                i === layers.length - 1
                  ? "flex min-h-0 flex-1 bg-[#586577]"
                  : i === 0
                    ? "flex h-[37px] shrink-0 border-b border-[#383838]"
                    : "flex h-[39px] shrink-0 border-b border-[#383838]"
              }
            >
              <button type="button" aria-label="Visibilidad" className="flex w-[31px] shrink-0 items-center justify-center border-r border-[#383838] bg-[#a6640c] pb-0.5">
                <Eye />
              </button>
              <button type="button" className={l.thumb === "selected" ? "flex flex-1 items-center gap-2 pl-[33px]" : l.thumb === "corner" ? "flex flex-1 items-center gap-2 pl-[35px]" : "flex flex-1 items-center gap-[9px] pl-[35px]"}>
                <Thumb kind={l.thumb} />
                <span className="whitespace-nowrap">{l.name}</span>
              </button>
            </li>
          ))}
        </ul>
        <div className="flex w-[14px] shrink-0 flex-col items-center border-l border-[#333] bg-[#3f3f3f] pt-[6px] pb-[5px]">
          <Svg w={5} h={3}><path d="M0 3h5L2.500 0z" fill="#eee" /></Svg>
          <div className="flex-[150]" />
          <div className="w-[11px] flex-[116] rounded-[3px] border border-[#808080] bg-linear-to-r from-[#727272] to-[#606060]" />
          <div className="flex-[11]" />
          <Down />
        </div>
      </div>
      <LayerActions />
    </section>
  );
}

function LayerActions() {
  const items: [string, React.ReactNode][] = [
    ["Enlazar", <path d="M7 6H5Q2 6 2 8.500T5 11h2M10 6h2q3 0 3 2.500T12 11h-2M5.500 8.500h6" stroke="#8a8a8a" strokeWidth="1.600" />],
    ["Efectos", <><Serif x={3} y={13} s={15} italic>fx</Serif><path d="M15 13h3l-1.500 2z" fill={G} /></>],
    ["Máscara", <><path d="M3 3h13v11H3z" fill={G} /><circle cx="9.500" cy="8.500" r="3" fill="#444" /></>],
    ["Ajuste", <><circle cx="8.500" cy="8.500" r="5" fill="#666" stroke={G} /><path d="M5 12a5 5 0 0 1 7-7z" fill={G} /><path d="M15 13h3l-1.500 2z" fill={G} /></>],
    ["Grupo", <path d="M3 4h5l1 1.500h6V13H3z" fill={G} />],
    ["Nueva capa", <><path d="M4 4h10v10H9V9H4z" fill={G} /><path d="M4 10h4v4z" fill={G} /></>],
    ["Eliminar", <path d="M3 5.500h12M7 5V3.500h4V5M4.500 7v7h9V7M7 7v6M9 7v6M11 7v6" stroke={G} strokeWidth="1.200" />],
  ];
  return (
    <div className="flex h-5 shrink-0 items-center gap-[9px] border-t border-[#383838] pl-[37px]">
      {items.map(([name, icon]) => (
        <button type="button" key={name} aria-label={name}>
          <Svg w={18} h={17}>{icon}</Svg>
        </button>
      ))}
    </div>
  );
}

/* ---------- Color panel ---------- */

function Channel({ name, value, track }: { name: string; value: number; track: string }) {
  const id = `channel-${name}`;
  return (
    <div className="flex h-6 items-start">
      <label htmlFor={id} className="w-[15px] pt-px">{name}</label>
      <div className="relative w-[85px]">
        <div className={`mt-px h-[6px] border border-[#999] ${track}`} />
        <input
          id={id}
          type="range"
          min={0}
          max={255}
          defaultValue={value}
          className="absolute top-2 -left-[5px] h-[9px] w-[95px] appearance-none bg-transparent [&::-webkit-slider-thumb]:h-[9px] [&::-webkit-slider-thumb]:w-[10px] [&::-webkit-slider-thumb]:appearance-none [&::-webkit-slider-thumb]:bg-[#b0b0b0] [&::-webkit-slider-thumb]:[clip-path:polygon(50%_0,100%_65%,100%_100%,0_100%,0_65%)]"
        />
      </div>
      <input aria-label={`Valor ${name}`} defaultValue={value} className={`ml-[6px] h-[19px] w-[46px] pl-1 ${FIELD}`} />
    </div>
  );
}

function ColorPanel() {
  return (
    <section className="shrink-0 text-[10px] text-white">
      <TabBar tabs={["Color", "Muestras", "Estilos"]} />
      <div className="flex gap-[9px] pt-[7px] pl-[5px]">
        <div className="pt-px"><Swatches size="panel" /></div>
        <div className="h-[75px]">
          <Channel name="R" value={255} track="bg-linear-to-r from-[#00f2e1] to-[#fff2e1]" />
          <Channel name="G" value={242} track="bg-linear-to-r from-[#ff00e1] to-[#ffffe1]" />
          <Channel name="B" value={225} track="bg-linear-to-r from-[#fff200] to-[#fff2ff]" />
        </div>
      </div>
      <div className="mr-9 mb-[2px] ml-[6px] flex h-4 border border-[#2e2e2e]">
        <div className="flex-1 bg-[linear-gradient(to_bottom,#fff_0%,#fff0_50%,#0000_50%,#000_100%),linear-gradient(to_right,#e2231a,#ffef00_16%,#00a03c_33%,#00a8f0_50%,#2a1a86_67%,#e5007e_83%,#e2231a)]" />
        <div className="w-2 bg-linear-to-b from-white from-50% to-black to-50%" />
      </div>
    </section>
  );
}

export default function App() {
  return (
    <div className="flex h-screen flex-col overflow-hidden bg-[#535353] font-['DejaVu_Sans_Condensed','DejaVu_Sans',sans-serif]">
      <MenuBar />
      <OptionsBar />
      <div className="flex min-h-0 flex-1">
        <Toolbar />
        <div className="w-px shrink-0 bg-[#2c2c2c]" />
        <Document />
        <aside className="flex w-[246px] shrink-0 flex-col border-r border-l-[3px] border-[#282828]">
          <div className="flex h-3 shrink-0 items-center justify-end border-b border-[#2c2c2c] bg-[#3a3a3a] pr-1">
            <Chevrons />
          </div>
          <CharacterPanel />
          <div className="h-[2px] shrink-0 bg-[#282828]" />
          <LayersPanel />
          <div className="h-[2px] shrink-0 bg-[#282828]" />
          <ColorPanel />
        </aside>
      </div>
    </div>
  );
}
